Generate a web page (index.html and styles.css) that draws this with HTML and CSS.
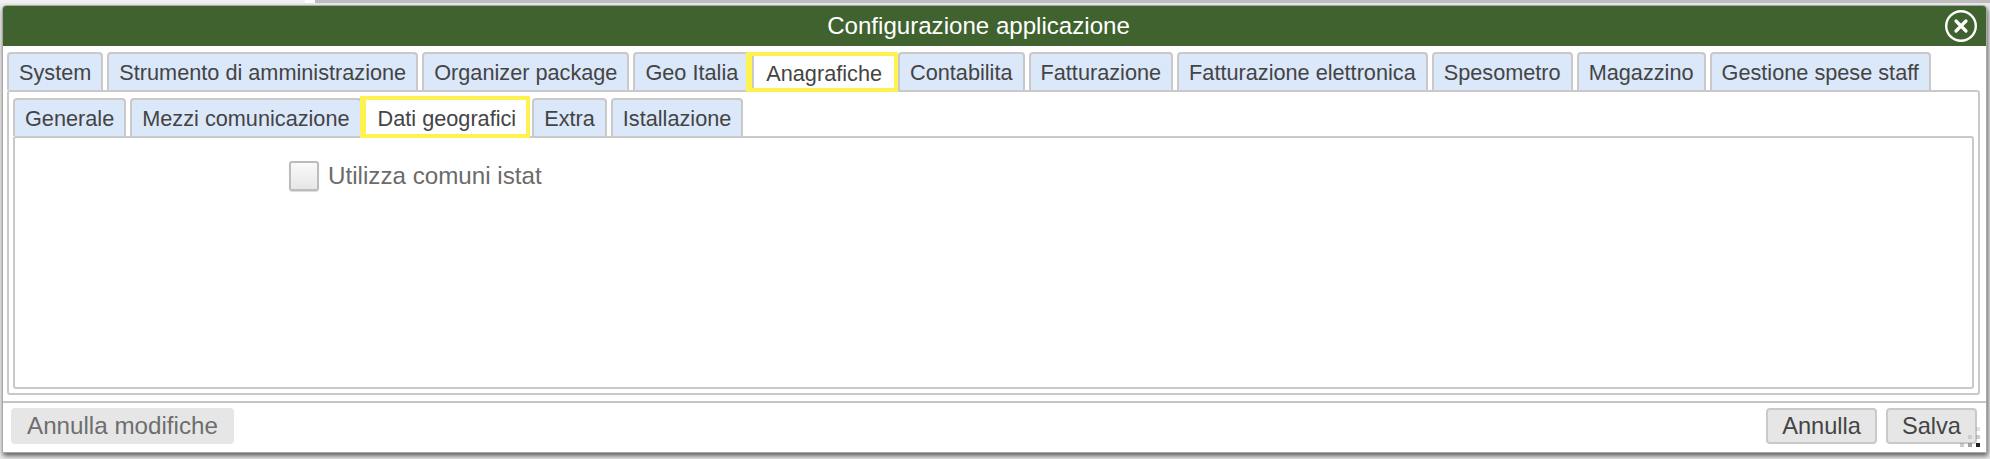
FILE: index.html
```html
<!DOCTYPE html>
<html lang="it">
<head>
<meta charset="utf-8">
<title>Configurazione applicazione</title>
<link rel="stylesheet" href="styles.css">
</head>
<body>
<div class="backdrop-strip"><span class="strip-left"></span><span class="strip-gap"></span><span class="strip-right"></span></div>
<section class="dialog">
  <header class="titlebar">
    <h1 class="title">Configurazione applicazione</h1>
    <button class="close" aria-label="Chiudi">
      <svg width="34" height="34" viewBox="0 0 34 34"><circle cx="17" cy="17" r="14.8" fill="none" stroke="#fff" stroke-width="2.4"/><path d="M12 12l10 10M22 12l-10 10" stroke="#fff" stroke-width="3.2" stroke-linecap="round" fill="none"/></svg>
    </button>
  </header>
  <div class="body">
    <nav class="tabs">
      <a class="tab">System</a>
      <a class="tab">Strumento di amministrazione</a>
      <a class="tab">Organizer package</a>
      <a class="tab">Geo Italia</a>
      <a class="tab active">Anagrafiche</a>
      <a class="tab">Contabilita</a>
      <a class="tab">Fatturazione</a>
      <a class="tab">Fatturazione elettronica</a>
      <a class="tab">Spesometro</a>
      <a class="tab">Magazzino</a>
      <a class="tab">Gestione spese staff</a>
    </nav>
    <div class="panel">
      <nav class="tabs sub">
        <a class="tab">Generale</a>
        <a class="tab">Mezzi comunicazione</a>
        <a class="tab active">Dati geografici</a>
        <a class="tab">Extra</a>
        <a class="tab">Istallazione</a>
      </nav>
      <div class="subpanel">
        <label class="check"><span class="box"></span>Utilizza comuni istat</label>
      </div>
    </div>
  </div>
  <footer class="footer">
    <button class="btn btn-disabled">Annulla modifiche</button>
    <div class="actions">
      <button class="btn">Annulla</button>
      <button class="btn">Salva</button>
    </div>
  </footer>
  <svg class="grip" width="22" height="22" viewBox="0 0 22 22"><g fill="#999"><rect x="16" y="0" width="4" height="4" opacity=".3"/><rect x="16" y="8" width="4" height="4" opacity=".5"/><rect x="8" y="8" width="4" height="4" opacity=".3"/><rect x="0" y="16" width="4" height="4" opacity=".5"/><rect x="8" y="16" width="4" height="4" opacity=".9"/></g><rect x="16" y="16" width="4" height="4" fill="#222"/></svg>
</section>
</body>
</html>
```

FILE: styles.css
```css
* { box-sizing: border-box; }
html, body { margin: 0; padding: 0; }
body {
  width: 1990px;
  height: 459px;
  overflow: hidden;
  background: #ececec;
  font-family: "Liberation Sans", Arial, sans-serif;
  font-size: 21.7px;
  color: #444;
}
.backdrop-strip { display: flex; height: 3px; }
.strip-left { width: 305px; background: #f0f0f0; }
.strip-gap { width: 10px; background: #fff; }
.strip-right { flex: 1; background: #bdbdbd; }
.dialog {
  position: relative;
  margin: 2px 3px 0 2px;
  height: 448px;
  background: #fff;
  border: 1px solid #a9a9a9;
  border-radius: 4px 4px 0 0;
  box-shadow: 1px 3px 5px rgba(0, 0, 0, .6);
  display: flex;
  flex-direction: column;
}
.titlebar {
  height: 40px;
  flex: none;
  background: #3f622f;
  display: flex;
  align-items: center;
  justify-content: center;
  padding-right: 32px;
  position: relative;
  border-radius: 3px 3px 0 0;
}
.title { margin: 0; font-size: 24.1px; font-weight: 400; color: #fff; }
.close {
  position: absolute;
  right: 8px;
  top: 3px;
  width: 34px;
  height: 34px;
  padding: 0;
  background: none;
  border: 0;
  display: block;
}
.body { padding: 6px 6px 0 4px; }
.tabs { display: flex; gap: 4px; height: 38px; align-items: flex-start; }
.tab {
  height: 38px;
  line-height: 37px;
  padding: 0 10px;
  background: #dbe8fa;
  border: 2px solid #c9c9c9;
  border-bottom: 0;
  border-radius: 4px 4px 0 0;
  white-space: nowrap;
}
.tab.active {
  position: relative;
  z-index: 1;
  height: 40px;
  line-height: 35px;
  background: #fff;
  border: 4px solid #fdf24f;
  border-left-width: 6px;
  border-radius: 0;
  padding: 0 12px 0 14px;
  margin: 0 -4px 0 -8px;
  box-shadow: inset 2px 0 0 #c9c9c9;
}
.sub .tab { line-height: 38px; }
.sub .tab.active {
  height: 42px;
  line-height: 38px;
  padding: 0 10px 0 12px;
  margin: -2px -2px 0 -6px;
  box-shadow: none;
}
.panel {
  height: 305px;
  border: 2px solid #c9c9c9;
  border-radius: 3px;
  padding: 6px 4px 4px 4px;
}
.subpanel {
  height: 253px;
  border: 2px solid #c9c9c9;
  border-radius: 3px;
  padding: 22px 0 0 274px;
}
.check { display: flex; align-items: center; gap: 9px; color: #6b6b6b; font-size: 24.2px; height: 32px; }
.box {
  width: 30px;
  height: 30px;
  background: linear-gradient(#fafafa, #e6e6e6);
  border: 2px solid #bcbcbc;
  border-radius: 3px;
  box-shadow: 0 1px 1px rgba(0, 0, 0, .15);
}
.footer {
  margin-top: 6px;
  height: 51px;
  border-top: 2px solid #c4c4c4;
  padding: 5px 9px 0 8px;
  display: flex;
  justify-content: space-between;
  align-items: flex-start;
}
.actions { display: flex; gap: 9px; }
.btn {
  height: 36px;
  padding: 0 14px;
  font: inherit;
  font-size: 23.6px;
  color: #444;
  background: #e6e6e6;
  border: 2px solid #c9c9c9;
  border-radius: 4px;
}
.btn-disabled { border-color: #e6e6e6; color: #6e6e6e; font-size: 24.2px; }
.grip { position: absolute; right: 4px; bottom: 3px; }
```
